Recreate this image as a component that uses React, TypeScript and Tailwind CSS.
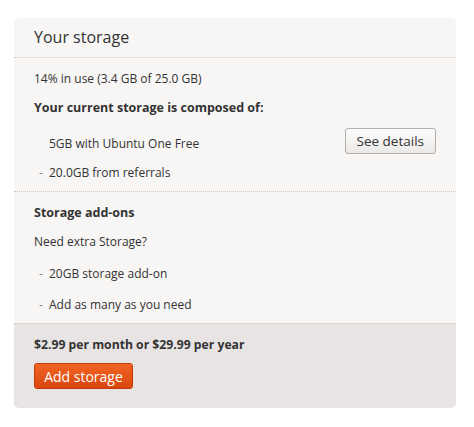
export default function App() {
  const font = { fontFamily: '"Open Sans", "Noto Sans", sans-serif' };
  return (
    <div className="min-h-[427px] w-[474px] bg-white pt-[18px] pl-[14px] text-[#333]" style={font}>
      <div className="w-[442px] rounded-[5px] bg-[#f7f6f5] overflow-hidden">
        <div className="h-[40px] px-5 pt-[7px] text-[16px] leading-[24px] text-[#333] border-b border-dotted border-[#c9c6c4]">
          Your storage
        </div>

        <div className="px-5 pt-[11px] pb-[8px] text-[12px] leading-[20px]">
          <p>14% in use (3.4 GB of 25.0 GB)</p>
          <p className="mt-[9px] font-bold text-[12.5px]">Your current storage is composed of:</p>
          <div className="mt-[10px] flex items-center justify-between h-[26px]">
            <span className="pl-[15px] pt-[5px]">5GB with Ubuntu One Free</span>
            <button className="h-[26px] px-[11px] rounded-[3px] border border-[#b3aeab] bg-gradient-to-b from-[#fdfdfd] to-[#ebe9e7] text-[13.5px] text-[#333]">
              See details
            </button>
          </div>
          <p className="mt-[9px] flex">
            <span className="w-[15px] pl-[5px] text-[#888]">-</span>
            <span>20.0GB from referrals</span>
          </p>
        </div>

        <div className="px-5 pt-[11px] pb-[8px] text-[12px] leading-[20px] border-t border-dotted border-[#c9c6c4]">
          <p className="font-bold text-[12.5px]">Storage add-ons</p>
          <p className="mt-[9px]">Need extra Storage?</p>
          <p className="mt-[12px] flex">
            <span className="w-[15px] pl-[5px] text-[#888]">-</span>
            <span>20GB storage add-on</span>
          </p>
          <p className="mt-[11px] flex">
            <span className="w-[15px] pl-[5px] text-[#888]">-</span>
            <span>Add as many as you need</span>
          </p>
        </div>

        <div className="bg-[#e8e4e3] px-5 pt-[11px] pb-[19px] border-t border-dotted border-[#c9c6c4]">
          <p className="text-[12.2px] leading-[20px] font-bold">$2.99 per month or $29.99 per year</p>
          <button className="mt-[8px] h-[26px] w-[99px] rounded-[3px] border border-[#c23b0b] bg-gradient-to-b from-[#f26422] to-[#d9460f] text-[14px] text-white">
            Add storage
          </button>
        </div>
      </div>
    </div>
  );
}
